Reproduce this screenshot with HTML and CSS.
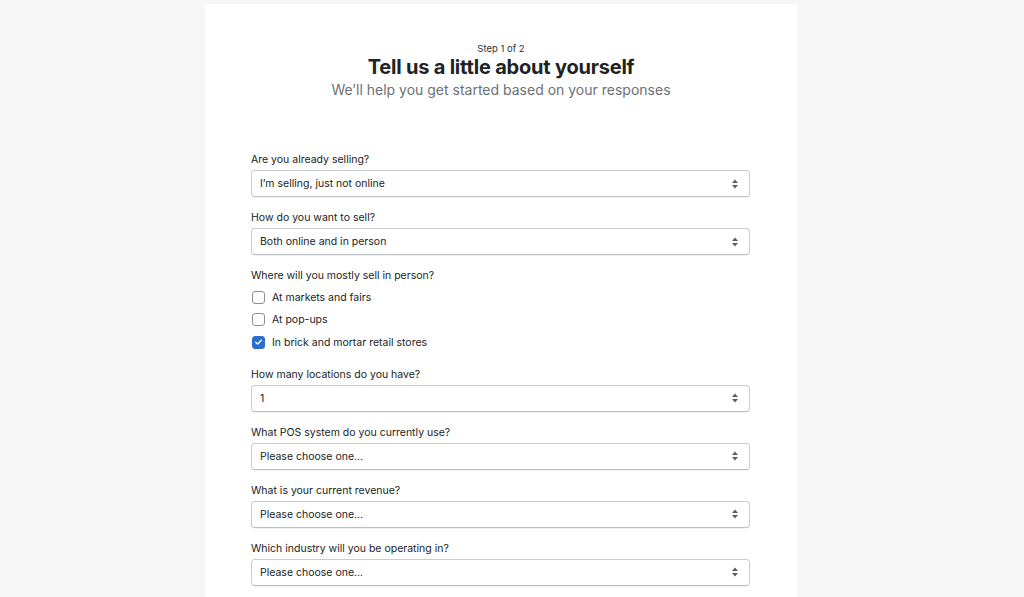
FILE: index.html
```html
<!DOCTYPE html>
<html>
<head>
<meta charset="utf-8">
<link rel="stylesheet" href="styles.css">
</head>
<body>
<div class="page">
  <div class="card">
    <header class="head">
      <div class="step">Step 1 of 2</div>
      <h1 class="title">Tell us a little about yourself</h1>
      <p class="subtitle">We’ll help you get started based on your responses</p>
    </header>
    <form class="form">
      <div class="field">
        <label class="label">Are you already selling?</label>
        <div class="select"><span>I’m selling, just not online</span><svg class="arrows" viewBox="0 0 8 12" width="8" height="12"><path d="M4 1.5 L7 5 H1 Z M4 10.5 L7 7 H1 Z" fill="#5c5f62"/></svg></div>
      </div>
      <div class="field">
        <label class="label">How do you want to sell?</label>
        <div class="select"><span>Both online and in person</span><svg class="arrows" viewBox="0 0 8 12" width="8" height="12"><path d="M4 1.5 L7 5 H1 Z M4 10.5 L7 7 H1 Z" fill="#5c5f62"/></svg></div>
      </div>
      <div class="field">
        <label class="label">Where will you mostly sell in person?</label>
        <div class="checks">
          <div class="check"><span class="box"></span><span>At markets and fairs</span></div>
          <div class="check"><span class="box"></span><span>At pop-ups</span></div>
          <div class="check"><span class="box checked"><svg viewBox="0 0 12 12" width="12" height="12"><path d="M3 6.3 L5.1 8.3 L9 4" fill="none" stroke="#fff" stroke-width="1.5" stroke-linecap="round" stroke-linejoin="round"/></svg></span><span>In brick and mortar retail stores</span></div>
        </div>
      </div>
      <div class="field">
        <label class="label">How many locations do you have?</label>
        <div class="select"><span>1</span><svg class="arrows" viewBox="0 0 8 12" width="8" height="12"><path d="M4 1.5 L7 5 H1 Z M4 10.5 L7 7 H1 Z" fill="#5c5f62"/></svg></div>
      </div>
      <div class="field">
        <label class="label">What POS system do you currently use?</label>
        <div class="select"><span>Please choose one...</span><svg class="arrows" viewBox="0 0 8 12" width="8" height="12"><path d="M4 1.5 L7 5 H1 Z M4 10.5 L7 7 H1 Z" fill="#5c5f62"/></svg></div>
      </div>
      <div class="field">
        <label class="label">What is your current revenue?</label>
        <div class="select"><span>Please choose one...</span><svg class="arrows" viewBox="0 0 8 12" width="8" height="12"><path d="M4 1.5 L7 5 H1 Z M4 10.5 L7 7 H1 Z" fill="#5c5f62"/></svg></div>
      </div>
      <div class="field">
        <label class="label">Which industry will you be operating in?</label>
        <div class="select"><span>Please choose one...</span><svg class="arrows" viewBox="0 0 8 12" width="8" height="12"><path d="M4 1.5 L7 5 H1 Z M4 10.5 L7 7 H1 Z" fill="#5c5f62"/></svg></div>
      </div>
    </form>
  </div>
</div>
</body>
</html>
```
FILE: styles.css
```css
html, body {
  margin: 0;
  padding: 0;
  background: #f6f6f7;
  height: 597px;
  overflow: hidden;
}
body {
  font-family: Inter, "Noto Sans", "Liberation Sans", sans-serif;
  color: #202223;
}
.page {
  padding: 4px 0 0 205px;
}
.card {
  width: 592px;
  min-height: 700px;
  background: #ffffff;
  box-sizing: border-box;
  padding: 39px 46px 0 46px;
}
.head {
  text-align: center;
  margin-bottom: 52px;
}
.step {
  font-size: 9.5px;
  line-height: 12px;
  color: #303235;
}
.title {
  margin: 0;
  font-size: 20px;
  line-height: 24px;
  font-weight: 700;
  letter-spacing: -0.2px;
  color: #202223;
}
.subtitle {
  margin: 1px 0 0;
  font-size: 14px;
  line-height: 20px;
  color: #6d7175;
}
.form {
  display: flex;
  flex-direction: column;
}
.field {
  display: flex;
  flex-direction: column;
  margin-bottom: 13px;
}
.label {
  font-size: 10.5px;
  line-height: 15px;
  margin-bottom: 3px;
  color: #202223;
}
.select {
  width: 499px;
  height: 27px;
  box-sizing: border-box;
  border: 1px solid #c9cccf;
  border-bottom-color: #babfc3;
  border-radius: 4px;
  box-shadow: 0 1px 0 rgba(0,0,0,0.05);
  display: flex;
  align-items: center;
  justify-content: space-between;
  padding: 0 10px 0 8px;
  font-size: 10.5px;
  color: #202223;
}
.arrows {
  display: block;
}
.checks {
  display: flex;
  flex-direction: column;
}
.check {
  height: 22.5px;
  display: flex;
  align-items: center;
  gap: 7px;
  font-size: 10.5px;
}
.box {
  width: 13px;
  height: 13px;
  box-sizing: border-box;
  border: 1px solid #8c9196;
  border-radius: 3px;
  margin-left: 1px;
  display: flex;
  align-items: center;
  justify-content: center;
  background: #fff;
}
.box.checked {
  background: #2c6ecb;
  border-color: #2c6ecb;
}
.box svg {
  display: block;
}
```
